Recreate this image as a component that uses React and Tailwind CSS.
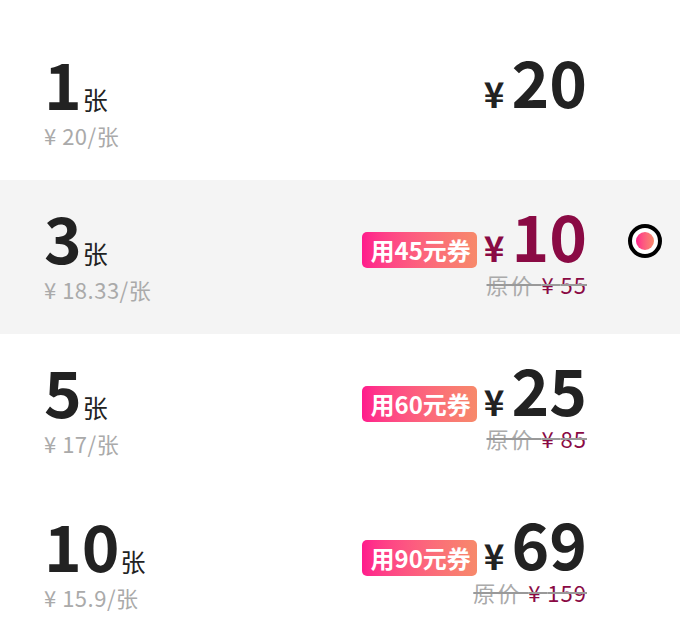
import React, { useState } from "react";

const FONT = { fontFamily: '"Noto Sans CJK SC", "Noto Sans", sans-serif' };

const PLANS = [
  { count: 1, unit: "20", price: 20 },
  { count: 3, unit: "18.33", price: 10, coupon: 45, original: 55 },
  { count: 5, unit: "17", price: 25, coupon: 60, original: 85 },
  { count: 10, unit: "15.9", price: 69, coupon: 90, original: 159 },
];

function PlanRow({ plan, selected, onSelect }) {
  const priceColor = selected ? "text-[#8a0a44]" : "text-[#222222]";
  return (
    <div
      onClick={onSelect}
      className={`flex items-start h-[154px] pt-[24px] cursor-pointer ${selected ? "bg-[#f4f4f4]" : "bg-white"}`}
    >
      {/* LEFT: count + unit price */}
      <div className="flex-1 pl-[44px]">
        <div className="flex items-baseline text-[#222222]">
          <span className="text-[64px] leading-[64px] font-bold">{plan.count}</span>
          <span className="text-[25px] ml-[1px]">张</span>
        </div>
        <div className="text-[22px] leading-[28px] text-[#aaaaaa] mt-[2px] tracking-[0.5px]">
          ¥ {plan.unit}/张
        </div>
      </div>

      {/* RIGHT: coupon + price */}
      <div className="flex flex-col items-end">
        <div className="flex items-center">
          {plan.coupon && (
            <span className="h-[36px] flex items-center pl-[8px] pr-[6px] mr-[7px] mt-[22px] rounded-[5px] bg-gradient-to-r from-[#ff1a8c] to-[#f7896a] text-white text-[24px] font-bold leading-none">
              用{plan.coupon}元券
            </span>
          )}
          <span className={`flex items-baseline ${priceColor}`}>
            <span className="text-[35px] font-bold mr-[7px]">¥</span>
            <span className="text-[64px] leading-[60px] font-bold">{plan.price}</span>
          </span>
        </div>
        {plan.original && (
          <div className="text-[22px] leading-[24px] line-through decoration-[#999999] mt-[-2px] whitespace-pre">
            <span className="text-[#aaaaaa] tracking-[2px]">原价 </span>
            <span className="text-[#8a0a44] tracking-[1px]">¥ {plan.original}</span>
          </div>
        )}
      </div>

      {/* RADIO */}
      <div className="w-[93px] pl-[41px] pt-[20px]">
        {selected && (
          <div className="w-[34px] h-[34px] rounded-full border-[4px] border-black flex items-center justify-center bg-white">
            <div className="w-[18px] h-[18px] rounded-full bg-gradient-to-r from-[#ff1a8c] to-[#f7896a]" />
          </div>
        )}
      </div>
    </div>
  );
}

function App() {
  const [selected, setSelected] = useState(1);

  return (
    <div className="bg-white pt-[26px] min-h-[633px] overflow-hidden" style={FONT}>
      {PLANS.map((plan, i) => (
        <PlanRow
          key={plan.count}
          plan={plan}
          selected={selected === i}
          onSelect={() => setSelected(i)}
        />
      ))}
    </div>
  );
}

export default App;
